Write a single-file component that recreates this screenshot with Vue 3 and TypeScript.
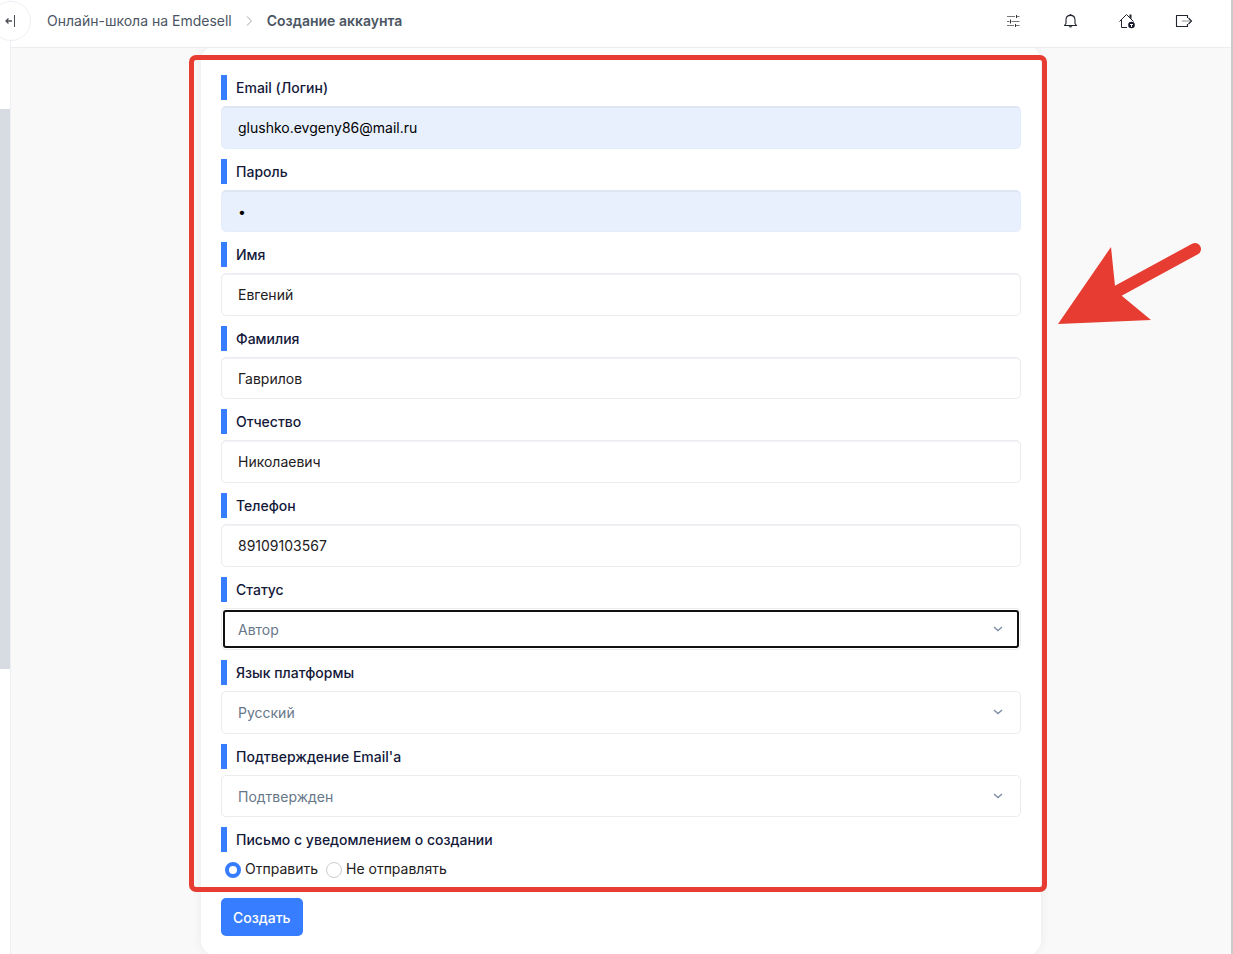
<script setup lang="ts">
import { ref } from 'vue'

interface Field {
  id: string
  label: string
  kind: 'email' | 'password' | 'text' | 'tel' | 'select'
  value: string
  options?: string[]
  filled?: boolean
  active?: boolean
}

const fields = ref<Field[]>([
  { id: 'email', label: 'Email (Логин)', kind: 'email', value: 'glushko.evgeny86@mail.ru', filled: true },
  { id: 'password', label: 'Пароль', kind: 'password', value: '1', filled: true },
  { id: 'first-name', label: 'Имя', kind: 'text', value: 'Евгений' },
  { id: 'last-name', label: 'Фамилия', kind: 'text', value: 'Гаврилов' },
  { id: 'patronymic', label: 'Отчество', kind: 'text', value: 'Николаевич' },
  { id: 'phone', label: 'Телефон', kind: 'tel', value: '89109103567' },
  { id: 'status', label: 'Статус', kind: 'select', value: 'Автор', options: ['Автор'], active: true },
  { id: 'language', label: 'Язык платформы', kind: 'select', value: 'Русский', options: ['Русский'] },
  { id: 'confirmed', label: "Подтверждение Email'а", kind: 'select', value: 'Подтвержден', options: ['Подтвержден'] },
])

const notify = ref('send')
</script>

<template>
  <div class="shell">
    <aside class="sidebar">
      <div class="sidebar-thumb"></div>
      <button class="collapse" type="button" aria-label="Свернуть меню">
        <svg width="12" height="14" viewBox="0 0 12 14">
          <path d="M7 7H1M3.500 4.500 1 7l2.500 2.500" fill="none" stroke="#4c4f58" stroke-width="1.300" />
          <path d="M9.500 1v12" stroke="#4c4f58" stroke-width="1" />
        </svg>
      </button>
    </aside>

    <div class="page">
      <header class="topbar">
        <nav class="crumbs">
          <a href="#">Онлайн-школа на Emdesell</a>
          <svg width="7" height="10" viewBox="0 0 7 10">
            <path d="M1 .5 5.500 5 1 9.500" fill="none" stroke="#a2a5ab" stroke-width="1" />
          </svg>
          <span class="current">Создание аккаунта</span>
        </nav>
        <div class="actions">
          <button type="button" aria-label="Настройки">
            <svg width="18" height="18" viewBox="0 0 18 18" fill="none" stroke="#777" stroke-width="1">
              <path d="M3 4.500h8M13 4.500h2.500M3 9.500h2.500M7.500 9.500h8M3 13.500h7M12 13.500h3.500" />
              <path d="M12.500 3v3M6.500 7.500v4M11.500 12v3" stroke="#333" />
            </svg>
          </button>
          <button type="button" aria-label="Уведомления">
            <svg width="18" height="18" viewBox="0 0 18 18" fill="none" stroke="#20242f" stroke-width="1.100">
              <path d="M3.500 13.500h12L14 11.500V8c0-3-2-4.600-4.500-4.600S5 5 5 8v3.500z" stroke-linejoin="round" />
              <path d="M9.500 2v1.500" stroke-width="1.500" />
              <path d="M7.600 14.200a2 2 0 0 0 3.800 0z" fill="#20242f" stroke="none" />
            </svg>
          </button>
          <button type="button" aria-label="Главная">
            <svg width="18" height="18" viewBox="0 0 18 18" fill="none" stroke="#20242f" stroke-width="1">
              <path d="M1.500 9.500 8.500 2.500l7 7M3.500 8v7.500h5.500" />
              <path d="M11.500 2.500h2V7l-2-2z" fill="#20242f" stroke="none" />
              <circle cx="13.500" cy="13" r="3.300" fill="#14182a" stroke="none" />
              <path d="M13.500 15v-3M12 12.500h3" stroke="#fff" />
            </svg>
          </button>
          <button type="button" aria-label="Выйти">
            <svg width="18" height="18" viewBox="0 0 18 18" fill="none" stroke="#20242f" stroke-width="1.100">
              <path d="M12.500 6V3.500h-11v11h11V12" stroke-linejoin="round" />
              <path d="M7 9h9" stroke="#999" />
              <path d="m13.500 6 3 3-3 3" />
            </svg>
          </button>
        </div>
      </header>

      <main class="content">
        <form class="card" @submit.prevent>
          <div class="fields">
            <div v-for="f in fields" :key="f.id" class="field">
              <label class="caption" :for="f.id">{{ f.label }}</label>
              <div v-if="f.kind === 'select'" class="select-wrap">
                <select :id="f.id" v-model="f.value" class="control" :class="{ active: f.active }">
                  <option v-for="o in f.options" :key="o">{{ o }}</option>
                </select>
                <svg class="chevron" width="10" height="6" viewBox="0 0 10 6">
                  <path d="M1 1l4 3.600L9 1" fill="none" stroke="#7c8ca3" stroke-width="1.300" />
                </svg>
              </div>
              <input v-else :id="f.id" v-model="f.value" :type="f.kind" class="control" :class="{ filled: f.filled }" autocomplete="off" />
            </div>
            <div class="field" role="radiogroup" aria-labelledby="notify-caption">
              <div id="notify-caption" class="caption">Письмо с уведомлением о создании</div>
              <div class="radios">
                <input id="notify-send" v-model="notify" type="radio" name="notify" value="send" />
                <label for="notify-send">Отправить</label>
                <input id="notify-skip" v-model="notify" type="radio" name="notify" value="skip" />
                <label for="notify-skip">Не отправлять</label>
              </div>
            </div>
            <div class="highlight"></div>
            <svg class="arrow" width="146" height="84" viewBox="0 0 146 84">
              <path d="M0 82 53 5l4 39 7 10 29 24z" fill="#e63c31" />
              <path d="M58 50 137 7" stroke="#e63c31" stroke-width="12" stroke-linecap="round" />
            </svg>
          </div>
          <button class="submit" type="submit">Создать</button>
        </form>
      </main>
    </div>
    <div class="scrollbar"></div>
  </div>
</template>

<style>
body {
  margin: 0;
}
</style>

<style scoped>
.shell {
  display: flex;
  height: 100vh;
  overflow: hidden;
  background: #f9f9f9;
  color: #14193a;
  font-family: Inter, "Noto Sans", sans-serif;
  font-size: 14px;
  line-height: 1.4;
}
.shell *,
.shell *::before {
  box-sizing: border-box;
}
.sidebar {
  position: relative;
  z-index: 2;
  flex: none;
  width: 11px;
  padding-top: 109px;
  background: #fff;
  border-right: 1px solid #eeeff2;
}
.sidebar-thumb {
  height: 560px;
  background: #d7dbe2;
}
.collapse {
  position: absolute;
  top: 1px;
  left: -9px;
  display: flex;
  align-items: center;
  justify-content: center;
  width: 40px;
  height: 40px;
  padding: 0;
  border: 1px solid #eeeff5;
  border-radius: 50%;
  background: #fff;
}
.page {
  display: flex;
  flex: 1;
  flex-direction: column;
  min-width: 0;
}
.scrollbar {
  flex: none;
  width: 2px;
  background: #cacaca;
}
.topbar {
  position: relative;
  z-index: 1;
  display: flex;
  flex: none;
  align-items: center;
  justify-content: space-between;
  height: 48px;
  padding: 0 38px 6px 36px;
  border-bottom: 1px solid #ededf0;
  background: #fff;
}
.crumbs {
  display: flex;
  align-items: center;
  gap: 14px;
  color: #4b5563;
}
.crumbs a {
  color: inherit;
  text-decoration: none;
}
.current {
  font-weight: 600;
}
.actions {
  display: flex;
  gap: 39px;
}
.actions button {
  display: flex;
  padding: 0;
  border: 0;
  background: none;
}
.content {
  display: flex;
  flex: 1;
  justify-content: center;
  align-items: flex-start;
}
.card {
  width: 100%;
  max-width: 840px;
  margin-top: -3px;
  padding: 30px 20px 20px;
  border-radius: 16px;
  background: #fff;
  box-shadow: 0 0 10px rgba(60, 70, 120, 0.08);
}
.fields {
  position: relative;
  display: flex;
  flex-direction: column;
  gap: 10px;
}
.field {
  display: flex;
  flex-direction: column;
  gap: 6px;
}
.caption {
  height: 25px;
  padding-left: 9px;
  border-left: 6px solid #377dff;
  font-weight: 500;
  line-height: 26px;
}
.control {
  display: block;
  width: 100%;
  margin: 0;
  padding: 11px 16px 10px;
  border: 1px solid #ebecf0;
  border-radius: 5px;
  background: #fff;
  color: #1e2022;
  font: inherit;
  appearance: none;
}
input.control {
  box-shadow: inset 0 1px 0 #f1f2f5;
}
.control.filled {
  border-color: #dfe6f3 #e6edfa #e6edfa;
  background: #e8f0fe;
  color: #000;
  box-shadow: inset 0 1px 0 #dde5f3;
}
select.control {
  color: #677788;
}
.control.active {
  outline: 2px solid #101010;
  outline-offset: -4px;
}
.select-wrap {
  position: relative;
}
.chevron {
  position: absolute;
  top: 18px;
  right: 18px;
  pointer-events: none;
}
.radios {
  display: flex;
  align-items: center;
  height: 20px;
  margin-bottom: 10px;
  padding-left: 4px;
  color: #1e2022;
}
.radios input {
  width: 16px;
  height: 16px;
  margin: 4px 4px 0 0;
  border: 1px solid #ccc;
  border-radius: 50%;
  background: #fff;
  appearance: none;
}
.radios input:checked {
  border: 4px solid #377dff;
}
.radios label {
  margin-right: 8px;
}
.highlight {
  position: absolute;
  inset: -20px -26px -4px -32px;
  border: 5px solid #e63c31;
  border-radius: 7px;
  pointer-events: none;
}
.arrow {
  position: absolute;
  top: 167px;
  left: calc(100% + 37px);
  pointer-events: none;
}
.submit {
  display: block;
  height: 38px;
  margin-top: 10px;
  padding: 0 12px;
  border: 0;
  border-radius: 5px;
  background: #377dff;
  color: #fff;
  font: inherit;
  font-weight: 500;
}
</style>
